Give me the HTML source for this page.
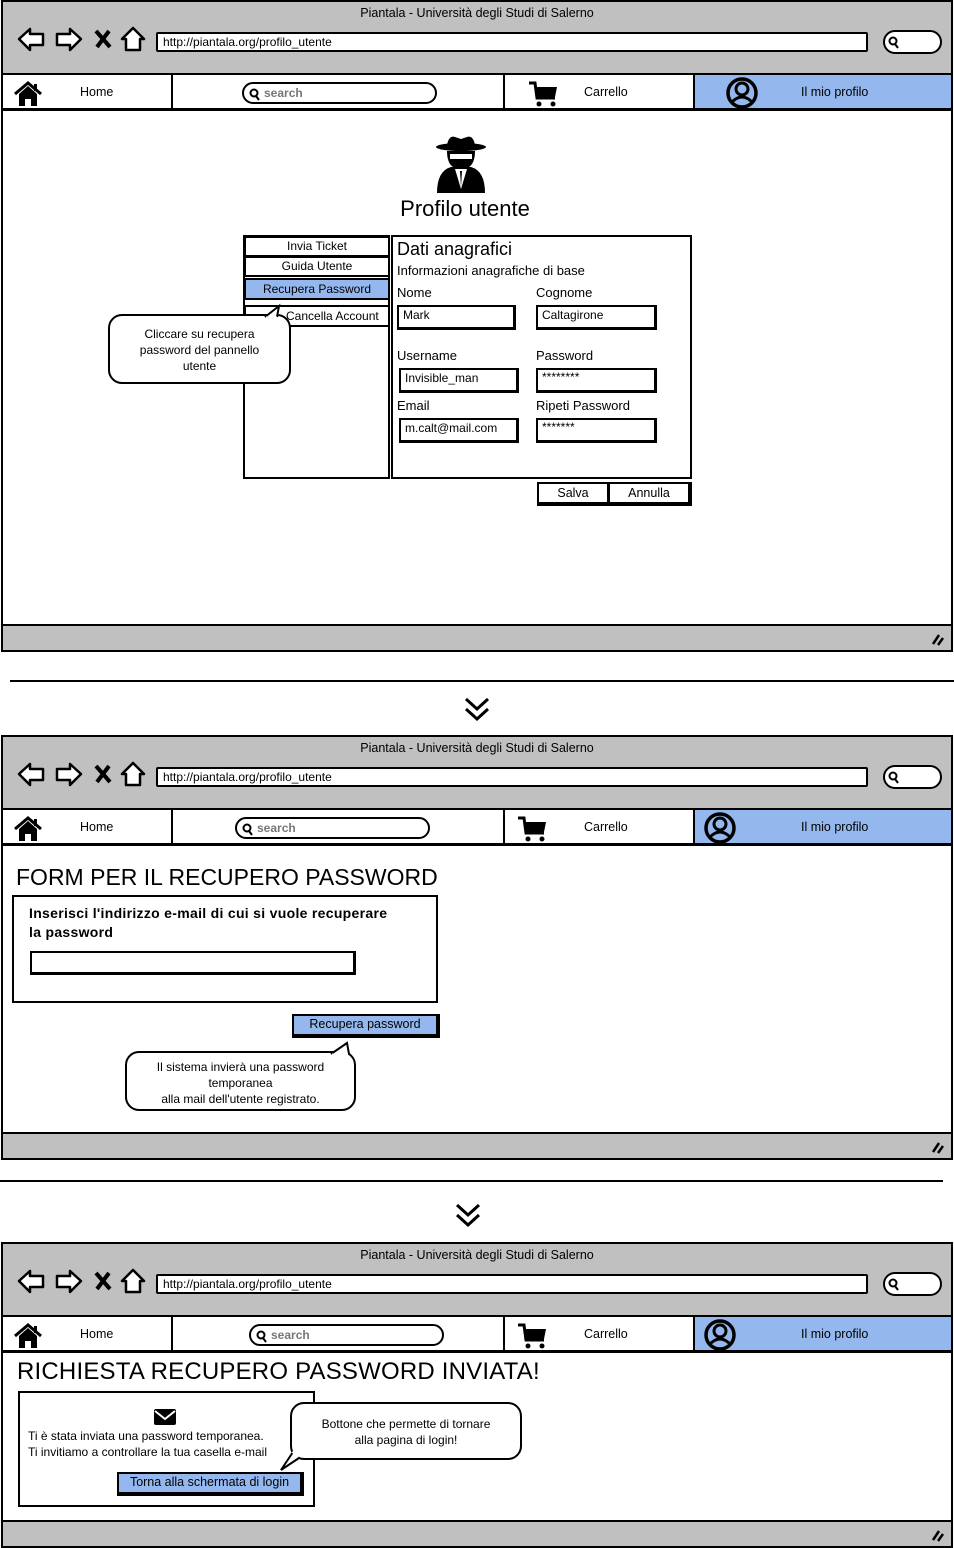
<!DOCTYPE html>
<html><head><meta charset="utf-8">
<style>
*{box-sizing:border-box;margin:0;padding:0}
body{width:954px;height:1548px;position:relative;background:#fff;font-family:"Liberation Sans",sans-serif;color:#000;overflow:hidden}
.a{position:absolute}
.fr{position:absolute;left:1px;width:952px;border:2px solid #000;background:#fff}
.gh{position:absolute;left:0;top:0;width:100%;height:71px;background:#c0c0c0}
.ttl{position:absolute;left:0;width:100%;text-align:center;font-size:12.5px;top:4px}
.url{position:absolute;left:153px;top:30px;width:712px;height:20px;background:#fff;border:2px solid #000;border-radius:2px;font-size:12px;padding-left:5px;line-height:16px}
.sp{position:absolute;left:880px;top:28px;width:59px;height:24px;border:2px solid #000;border-radius:12px;background:#fff}
.nav{position:absolute;left:0;top:71px;width:100%;height:38px;border-top:2px solid #000;border-bottom:3px solid #000;background:#fff}
.cell{position:absolute;top:0;height:100%;border-right:2px solid #000;font-size:12.5px}
.bb{position:absolute;left:0;bottom:0;width:100%;height:26px;background:#c0c0c0;border-top:2px solid #000}
.pill{position:absolute;top:7px;height:22px;border:2px solid #000;border-radius:11px;font-size:12px;color:#777;font-weight:bold;padding-left:20px;line-height:18px}
.bx{position:absolute;border:2px solid #000;background:#fff}
.inp{position:absolute;border:2px solid #000;border-right-width:3px;border-bottom-width:3px;background:#fff;font-size:12px;padding-left:4px;line-height:17px}
.lbl{position:absolute;font-size:13px}
.bub{position:absolute;border:2px solid #000;border-radius:14px;background:#fff;font-size:12px;text-align:center;line-height:16px}
.btn{position:absolute;background:#94b8ee;border:2px solid #000;border-right-width:4px;border-bottom-width:4px;font-size:12.5px;text-align:center}
</style></head><body>

<!-- ========== FRAME 1 ========== -->
<div class="fr" style="top:0;height:652px">
 <div class="gh"></div>
 <div class="ttl">Piantala - Università degli Studi di Salerno</div>
 <svg class="a" style="left:13px;top:24px" width="130" height="28" viewBox="0 0 130 28">
  <path d="M3 13 L14 3 L14 8 L27 8 L27 19 L14 19 L14 24 Z" fill="#fff" stroke="#000" stroke-width="2.5" stroke-linejoin="round"/>
  <path d="M65 13 L54 3 L54 8 L41 8 L41 19 L54 19 L54 24 Z" fill="#fff" stroke="#000" stroke-width="2.5" stroke-linejoin="round"/>
  <path d="M80 5 L94 21 M93 5 L81 21" stroke="#000" stroke-width="4"/>
  <path d="M117 2 L106 13 L110 13 L110 24 L124 24 L124 13 L128 13 Z" fill="#fff" stroke="#000" stroke-width="2.5" stroke-linejoin="round"/>
 </svg>
 <div class="url">http://piantala.org/profilo_utente</div>
 <div class="sp"><svg class="a" style="left:3px;top:4px" width="12" height="13"><circle cx="5" cy="5" r="3.5" fill="none" stroke="#000" stroke-width="2"/><path d="M7 8 L10 12" stroke="#000" stroke-width="2"/></svg></div>
 <div class="nav">
  <div class="cell" style="left:0;width:170px">
   <svg class="a" style="left:10px;top:6px" width="30" height="26"><path d="M2 13 L15 2 L28 13" fill="none" stroke="#000" stroke-width="3"/><path d="M6 13 L15 5 L24 13 L24 25 L18 25 L18 18 L12 18 L12 25 L6 25 Z" fill="#000"/><rect x="21" y="3" width="3" height="7" fill="#000"/></svg>
   <div class="a" style="left:77px;top:10px">Home</div>
  </div>
  <div class="cell" style="left:170px;width:332px"><div class="pill" style="left:69px;width:195px">search<svg class="a" style="left:5px;top:4px" width="12" height="13"><circle cx="5" cy="5" r="3.5" fill="none" stroke="#000" stroke-width="2"/><path d="M7 8 L10 12" stroke="#000" stroke-width="2"/></svg></div></div>
  <div class="cell" style="left:502px;width:190px">
   <svg class="a" style="left:22px;top:5px" width="32" height="28"><path d="M2 3 L8 3 L10 18 L28 18" fill="none" stroke="#000" stroke-width="3"/><path d="M9 7 L30 7 L28 17 L10 17 Z" fill="#000"/><circle cx="12" cy="24" r="2.5" fill="#000"/><circle cx="26" cy="24" r="2.5" fill="#000"/></svg>
   <div class="a" style="left:79px;top:10px">Carrello</div>
  </div>
  <div class="cell" style="left:692px;width:256px;background:#94b8ee;border-right:none">
   <svg class="a" style="left:30px;top:2px" width="34" height="32"><circle cx="17" cy="16" r="14" fill="#94b8ee" stroke="#000" stroke-width="3.5"/><circle cx="17" cy="12" r="6" fill="none" stroke="#000" stroke-width="3"/><path d="M6 26 Q17 14 28 26" fill="none" stroke="#000" stroke-width="3"/></svg>
   <div class="a" style="left:106px;top:10px">Il mio profilo</div>
  </div>
 </div>
 <svg class="a" style="left:430px;top:131px" width="56" height="62" viewBox="0 0 56 62">
  <path d="M14 12 Q16 2 22 4 L28 6 L34 4 Q40 2 42 12 Z" fill="#000"/>
  <ellipse cx="28" cy="14" rx="25" ry="4" fill="#000"/>
  <path d="M14 18 Q14 30 20 34 L36 34 Q42 30 42 18 Z" fill="#000"/>
  <rect x="17" y="21" width="22" height="5" fill="#fff"/>
  <path d="M4 60 Q4 38 18 34 L38 34 Q52 38 52 60 Z" fill="#000"/>
  <path d="M22 36 L28 56 L34 36 Z" fill="#fff"/><path d="M27 38 L28 54 L29 38 Z" fill="#000"/>
 </svg>
 <div class="a" style="left:0;width:924px;text-align:center;top:194px;font-size:22px">Profilo utente</div>
 <div class="bx" style="left:240px;top:233px;width:147px;height:244px"></div>
 <div class="bx" style="left:241px;top:234px;width:146px;height:21px;font-size:12px;text-align:center;line-height:17px">Invia Ticket</div>
 <div class="bx" style="left:241px;top:254px;width:146px;height:21px;font-size:12px;text-align:center;line-height:17px">Guida Utente</div>
 <div class="bx" style="left:241px;top:276px;width:146px;height:22px;font-size:12px;text-align:center;line-height:18px;background:#94b8ee">Recupera Password</div>
 <div class="bx" style="left:241px;top:303px;width:146px;height:22px;font-size:12px;line-height:18px;padding-left:40px">Cancella Account</div>
 <div class="bub" style="left:105px;top:312px;width:183px;height:70px;padding-top:10px">Cliccare su recupera<br>password del pannello<br>utente</div>
 <svg class="a" style="left:260px;top:300px" width="26" height="16"><path d="M2 15 L16 4 L14 15" fill="#fff" stroke="#000" stroke-width="2"/><path d="M3 16 L14 16" stroke="#fff" stroke-width="3"/></svg>
 <div class="bx" style="left:388px;top:233px;width:301px;height:244px"></div>
 <div class="a" style="left:394px;top:237px;font-size:18px">Dati anagrafici</div>
 <div class="lbl" style="left:394px;top:261px">Informazioni anagrafiche di base</div>
 <div class="lbl" style="left:394px;top:283px">Nome</div>
 <div class="lbl" style="left:533px;top:283px">Cognome</div>
 <div class="inp" style="left:394px;top:303px;width:119px;height:25px">Mark</div>
 <div class="inp" style="left:533px;top:303px;width:121px;height:25px">Caltagirone</div>
 <div class="lbl" style="left:394px;top:346px">Username</div>
 <div class="lbl" style="left:533px;top:346px">Password</div>
 <div class="inp" style="left:396px;top:366px;width:120px;height:25px">Invisible_man</div>
 <div class="inp" style="left:533px;top:366px;width:121px;height:25px;line-height:14px">********</div>
 <div class="lbl" style="left:394px;top:396px">Email</div>
 <div class="lbl" style="left:533px;top:396px">Ripeti Password</div>
 <div class="inp" style="left:396px;top:416px;width:120px;height:25px">m.calt@mail.com</div>
 <div class="inp" style="left:533px;top:416px;width:121px;height:25px;line-height:14px">*******</div>
 <div class="bx" style="left:534px;top:480px;width:72px;height:24px;border-bottom-width:4px;font-size:12.5px;text-align:center;line-height:19px">Salva</div>
 <div class="bx" style="left:605px;top:480px;width:84px;height:24px;border-bottom-width:4px;border-right-width:4px;font-size:12.5px;text-align:center;line-height:19px">Annulla</div>
 <div class="bb"><svg class="a" style="right:6px;top:6px" width="14" height="14"><path d="M2 12 L8 3 M7 13 L12 6" stroke="#000" stroke-width="2.5"/></svg></div>
</div>

<div class="a" style="left:10px;top:680px;width:944px;height:2px;background:#000"></div>
<svg class="a" style="left:463px;top:696px" width="28" height="27"><path d="M3 3 L14 13 L25 3 M3 13 L14 23 L25 13" fill="none" stroke="#000" stroke-width="3"/></svg>

<!-- ========== FRAME 2 ========== -->
<div class="fr" style="top:735px;height:425px">
 <div class="gh"></div>
 <div class="ttl">Piantala - Università degli Studi di Salerno</div>
 <svg class="a" style="left:13px;top:24px" width="130" height="28" viewBox="0 0 130 28">
  <path d="M3 13 L14 3 L14 8 L27 8 L27 19 L14 19 L14 24 Z" fill="#fff" stroke="#000" stroke-width="2.5" stroke-linejoin="round"/>
  <path d="M65 13 L54 3 L54 8 L41 8 L41 19 L54 19 L54 24 Z" fill="#fff" stroke="#000" stroke-width="2.5" stroke-linejoin="round"/>
  <path d="M80 5 L94 21 M93 5 L81 21" stroke="#000" stroke-width="4"/>
  <path d="M117 2 L106 13 L110 13 L110 24 L124 24 L124 13 L128 13 Z" fill="#fff" stroke="#000" stroke-width="2.5" stroke-linejoin="round"/>
 </svg>
 <div class="url">http://piantala.org/profilo_utente</div>
 <div class="sp"><svg class="a" style="left:3px;top:4px" width="12" height="13"><circle cx="5" cy="5" r="3.5" fill="none" stroke="#000" stroke-width="2"/><path d="M7 8 L10 12" stroke="#000" stroke-width="2"/></svg></div>
 <div class="nav">
  <div class="cell" style="left:0;width:170px">
   <svg class="a" style="left:10px;top:6px" width="30" height="26"><path d="M2 13 L15 2 L28 13" fill="none" stroke="#000" stroke-width="3"/><path d="M6 13 L15 5 L24 13 L24 25 L18 25 L18 18 L12 18 L12 25 L6 25 Z" fill="#000"/><rect x="21" y="3" width="3" height="7" fill="#000"/></svg>
   <div class="a" style="left:77px;top:10px">Home</div>
  </div>
  <div class="cell" style="left:170px;width:332px"><div class="pill" style="left:62px;width:195px">search<svg class="a" style="left:5px;top:4px" width="12" height="13"><circle cx="5" cy="5" r="3.5" fill="none" stroke="#000" stroke-width="2"/><path d="M7 8 L10 12" stroke="#000" stroke-width="2"/></svg></div></div>
  <div class="cell" style="left:502px;width:190px">
   <svg class="a" style="left:11px;top:5px" width="32" height="28"><path d="M2 3 L8 3 L10 18 L28 18" fill="none" stroke="#000" stroke-width="3"/><path d="M9 7 L30 7 L28 17 L10 17 Z" fill="#000"/><circle cx="12" cy="24" r="2.5" fill="#000"/><circle cx="26" cy="24" r="2.5" fill="#000"/></svg>
   <div class="a" style="left:79px;top:10px">Carrello</div>
  </div>
  <div class="cell" style="left:692px;width:256px;background:#94b8ee;border-right:none">
   <svg class="a" style="left:8px;top:2px" width="34" height="32"><circle cx="17" cy="16" r="14" fill="#94b8ee" stroke="#000" stroke-width="3.5"/><circle cx="17" cy="12" r="6" fill="none" stroke="#000" stroke-width="3"/><path d="M6 26 Q17 14 28 26" fill="none" stroke="#000" stroke-width="3"/></svg>
   <div class="a" style="left:106px;top:10px">Il mio profilo</div>
  </div>
 </div>
 <div class="a" style="left:13px;top:127px;font-size:23px">FORM PER IL RECUPERO PASSWORD</div>
 <div class="bx" style="left:9px;top:158px;width:426px;height:108px"></div>
 <div class="a" style="left:26px;top:167px;font-size:14px;font-weight:bold;line-height:19px;letter-spacing:0.3px">Inserisci l'indirizzo e-mail di cui si vuole recuperare<br>la password</div>
 <div class="inp" style="left:27px;top:214px;width:326px;height:24px"></div>
 <div class="btn" style="left:289px;top:277px;width:148px;height:24px;line-height:17px">Recupera password</div>
 <div class="bub" style="left:122px;top:314px;width:231px;height:60px;padding-top:6px">Il sistema invierà una password<br>temporanea<br>alla mail dell'utente registrato.</div>
 <svg class="a" style="left:326px;top:302px" width="24" height="16"><path d="M2 15 L18 4 L20 15" fill="#fff" stroke="#000" stroke-width="2"/><path d="M3 16 L19 16" stroke="#fff" stroke-width="3"/></svg>
 <div class="bb"><svg class="a" style="right:6px;top:6px" width="14" height="14"><path d="M2 12 L8 3 M7 13 L12 6" stroke="#000" stroke-width="2.5"/></svg></div>
</div>

<div class="a" style="left:0;top:1180px;width:943px;height:2px;background:#000"></div>
<svg class="a" style="left:454px;top:1202px" width="28" height="27"><path d="M3 3 L14 13 L25 3 M3 13 L14 23 L25 13" fill="none" stroke="#000" stroke-width="3"/></svg>

<!-- ========== FRAME 3 ========== -->
<div class="fr" style="top:1242px;height:306px">
 <div class="gh"></div>
 <div class="ttl">Piantala - Università degli Studi di Salerno</div>
 <svg class="a" style="left:13px;top:24px" width="130" height="28" viewBox="0 0 130 28">
  <path d="M3 13 L14 3 L14 8 L27 8 L27 19 L14 19 L14 24 Z" fill="#fff" stroke="#000" stroke-width="2.5" stroke-linejoin="round"/>
  <path d="M65 13 L54 3 L54 8 L41 8 L41 19 L54 19 L54 24 Z" fill="#fff" stroke="#000" stroke-width="2.5" stroke-linejoin="round"/>
  <path d="M80 5 L94 21 M93 5 L81 21" stroke="#000" stroke-width="4"/>
  <path d="M117 2 L106 13 L110 13 L110 24 L124 24 L124 13 L128 13 Z" fill="#fff" stroke="#000" stroke-width="2.5" stroke-linejoin="round"/>
 </svg>
 <div class="url">http://piantala.org/profilo_utente</div>
 <div class="sp"><svg class="a" style="left:3px;top:4px" width="12" height="13"><circle cx="5" cy="5" r="3.5" fill="none" stroke="#000" stroke-width="2"/><path d="M7 8 L10 12" stroke="#000" stroke-width="2"/></svg></div>
 <div class="nav">
  <div class="cell" style="left:0;width:170px">
   <svg class="a" style="left:10px;top:6px" width="30" height="26"><path d="M2 13 L15 2 L28 13" fill="none" stroke="#000" stroke-width="3"/><path d="M6 13 L15 5 L24 13 L24 25 L18 25 L18 18 L12 18 L12 25 L6 25 Z" fill="#000"/><rect x="21" y="3" width="3" height="7" fill="#000"/></svg>
   <div class="a" style="left:77px;top:10px">Home</div>
  </div>
  <div class="cell" style="left:170px;width:332px"><div class="pill" style="left:76px;width:195px">search<svg class="a" style="left:5px;top:4px" width="12" height="13"><circle cx="5" cy="5" r="3.5" fill="none" stroke="#000" stroke-width="2"/><path d="M7 8 L10 12" stroke="#000" stroke-width="2"/></svg></div></div>
  <div class="cell" style="left:502px;width:190px">
   <svg class="a" style="left:11px;top:5px" width="32" height="28"><path d="M2 3 L8 3 L10 18 L28 18" fill="none" stroke="#000" stroke-width="3"/><path d="M9 7 L30 7 L28 17 L10 17 Z" fill="#000"/><circle cx="12" cy="24" r="2.5" fill="#000"/><circle cx="26" cy="24" r="2.5" fill="#000"/></svg>
   <div class="a" style="left:79px;top:10px">Carrello</div>
  </div>
  <div class="cell" style="left:692px;width:256px;background:#94b8ee;border-right:none">
   <svg class="a" style="left:8px;top:2px" width="34" height="32"><circle cx="17" cy="16" r="14" fill="#94b8ee" stroke="#000" stroke-width="3.5"/><circle cx="17" cy="12" r="6" fill="none" stroke="#000" stroke-width="3"/><path d="M6 26 Q17 14 28 26" fill="none" stroke="#000" stroke-width="3"/></svg>
   <div class="a" style="left:106px;top:10px">Il mio profilo</div>
  </div>
 </div>
 <div class="a" style="left:14px;top:114px;font-size:24px;letter-spacing:0.2px">RICHIESTA RECUPERO PASSWORD INVIATA!</div>
 <div class="bx" style="left:15px;top:147px;width:297px;height:116px"></div>
 <svg class="a" style="left:150px;top:164px" width="24" height="18"><rect x="1" y="1" width="22" height="16" rx="2" fill="#000"/><path d="M2 3 L12 11 L22 3" fill="none" stroke="#fff" stroke-width="2"/></svg>
 <div class="a" style="left:25px;top:184px;font-size:12px;line-height:16px;white-space:nowrap">Ti è stata inviata una password temporanea.<br>Ti invitiamo a controllare la tua casella e-mail</div>
 <div class="btn" style="left:114px;top:228px;width:187px;height:24px;line-height:17px">Torna alla schermata di login</div>
 <div class="bub" style="left:287px;top:158px;width:232px;height:58px;padding-top:12px">Bottone che permette di tornare<br>alla pagina di login!</div>
 <svg class="a" style="left:274px;top:206px" width="26" height="22"><path d="M16 2 L4 20 L22 8" fill="#fff" stroke="#000" stroke-width="2"/><path d="M16 1 L22 6" stroke="#fff" stroke-width="4"/></svg>
 <div class="bb"><svg class="a" style="right:6px;top:6px" width="14" height="14"><path d="M2 12 L8 3 M7 13 L12 6" stroke="#000" stroke-width="2.5"/></svg></div>
</div>

</body></html>
